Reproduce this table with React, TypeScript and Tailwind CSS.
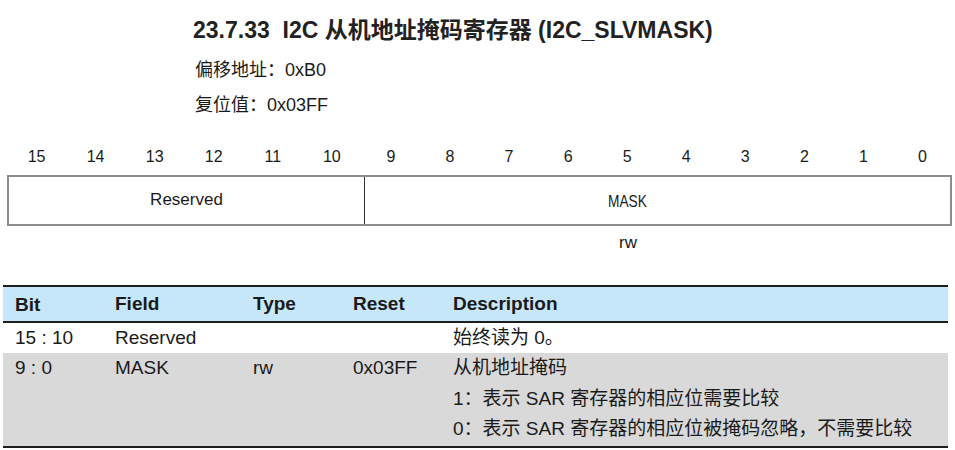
const bits = [15, 14, 13, 12, 11, 10, 9, 8, 7, 6, 5, 4, 3, 2, 1, 0];

export default function App() {
  return (
    <div className="w-[955px] h-[450px] bg-white text-[#1a1a1a] font-['Liberation_Sans','Noto_Sans_CJK_SC',sans-serif] overflow-hidden">
      {/* heading */}
      <div className="h-[60px] flex items-center pl-[193px]">
        <h1 className="text-[23px] font-bold whitespace-pre text-[#222]">
          23.7.33  I2C 从机地址掩码寄存器 (I2C_SLVMASK)
        </h1>
      </div>
      <div className="h-[20px] flex items-center pl-[195px] text-[18px]">偏移地址：0xB0</div>
      <div className="mt-[15px] h-[20px] flex items-center pl-[195px] text-[18px]">复位值：0x03FF</div>

      {/* bit numbers */}
      <div className="mt-[30px] h-[20px] ml-[7px] w-[945px] grid grid-cols-16 text-[16px]">
        {bits.map((b) => (
          <div key={b} className="flex items-center justify-center">
            {b}
          </div>
        ))}
      </div>

      {/* register box */}
      <div className="mt-[10px] ml-[7px] w-[945px] h-[51px] flex border-2 border-[#8c8c8c]">
        <div className="w-[355px] flex items-center justify-center text-[17px] pb-[2px]">Reserved</div>
        <div className="w-px bg-[#333]" />
        <div className="flex-1 flex items-center justify-center pr-[60px] pt-[2px] text-[16.5px]">
          <span className="inline-block scale-x-[0.83]">MASK</span>
        </div>
      </div>
      <div className="h-[34px] ml-[364px] w-[528px] flex items-center justify-center text-[17px]">rw</div>

      {/* field table */}
      <div className="mt-[25px] ml-[3px] w-[945px] text-[19px]">
        <div className="flex h-[38px] items-center bg-[#c6e7f9] border-y-2 border-[#1e1e1e] font-bold">
          <div className="w-[112px] pl-[12px] pt-[3px]">Bit</div>
          <div className="w-[138px]">Field</div>
          <div className="w-[100px]">Type</div>
          <div className="w-[100px]">Reset</div>
          <div className="flex-1">Description</div>
        </div>
        <div className="flex h-[30px] items-center">
          <div className="w-[112px] pl-[12px]">15 : 10</div>
          <div className="w-[138px]">Reserved</div>
          <div className="w-[100px]" />
          <div className="w-[100px]" />
          <div className="flex-1">始终读为 0。</div>
        </div>
        <div className="flex bg-[#d9d9d9] border-b-2 border-[#1e1e1e] pb-[1.5px]">
          <div className="w-[112px] pl-[12px] h-[30.5px] flex items-center">9 : 0</div>
          <div className="w-[138px] h-[30.5px] flex items-center">MASK</div>
          <div className="w-[100px] h-[30.5px] flex items-center">rw</div>
          <div className="w-[100px] h-[30.5px] flex items-center">0x03FF</div>
          <div className="flex-1 flex flex-col">
            <div className="h-[30.5px] flex items-center">从机地址掩码</div>
            <div className="h-[30.5px] flex items-center whitespace-pre">1：表示 SAR 寄存器的相应位需要比较</div>
            <div className="h-[30.5px] flex items-center whitespace-pre">0：表示 SAR 寄存器的相应位被掩码忽略，不需要比较</div>
          </div>
        </div>
      </div>
    </div>
  );
}
